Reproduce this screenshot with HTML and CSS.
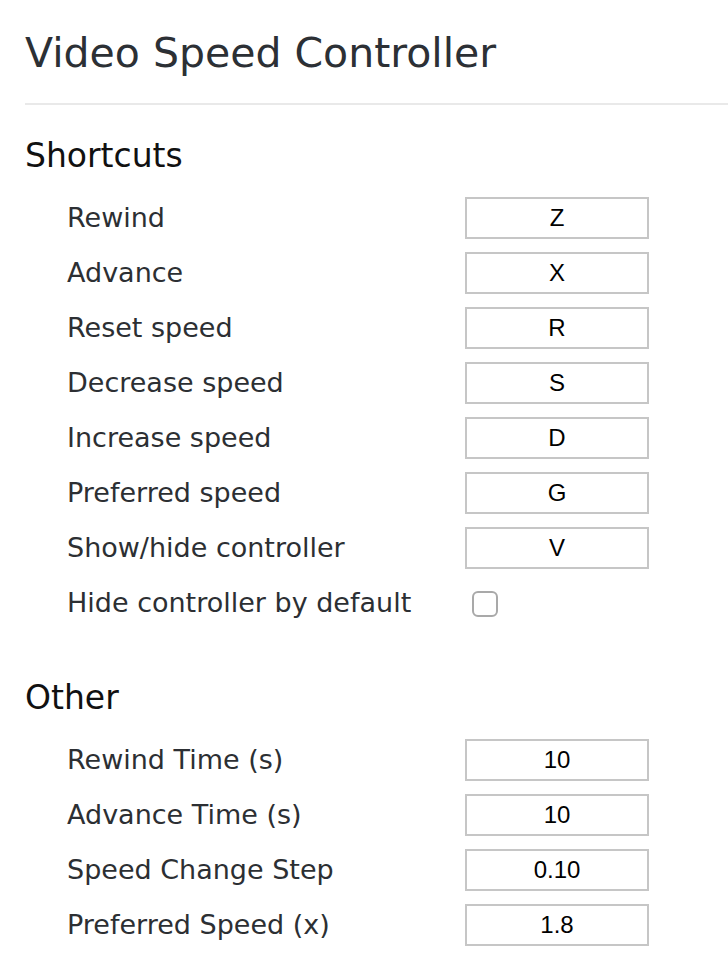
FILE: index.html
```html
<!DOCTYPE html>
<html lang="en">
<head>
<meta charset="utf-8">
<title>Video Speed Controller</title>
<link rel="stylesheet" href="styles.css">
</head>
<body>
<main class="page">
  <h1 class="title">Video Speed Controller</h1>

  <section class="section section-first">
    <h2 class="section-title">Shortcuts</h2>
    <div class="rows">
      <label class="label">Rewind</label><input class="field" type="text" value="Z">
      <label class="label">Advance</label><input class="field" type="text" value="X">
      <label class="label">Reset speed</label><input class="field" type="text" value="R">
      <label class="label">Decrease speed</label><input class="field" type="text" value="S">
      <label class="label">Increase speed</label><input class="field" type="text" value="D">
      <label class="label">Preferred speed</label><input class="field" type="text" value="G">
      <label class="label">Show/hide controller</label><input class="field" type="text" value="V">
      <label class="label">Hide controller by default</label><span class="check-cell"><input class="check" type="checkbox"></span>
    </div>
  </section>

  <section class="section section-other">
    <h2 class="section-title">Other</h2>
    <div class="rows">
      <label class="label">Rewind Time (s)</label><input class="field" type="text" value="10">
      <label class="label">Advance Time (s)</label><input class="field" type="text" value="10">
      <label class="label">Speed Change Step</label><input class="field" type="text" value="0.10">
      <label class="label">Preferred Speed (x)</label><input class="field" type="text" value="1.8">
    </div>
  </section>
</main>
</body>
</html>
```

FILE: styles.css
```css
html, body {
  margin: 0;
  padding: 0;
  background: #ffffff;
}

.page {
  padding: 29px 0 0 25px;
  font-family: "DejaVu Sans", "Liberation Sans", sans-serif;
}

.title {
  margin: 0;
  font-size: 41px;
  line-height: 48px;
  font-weight: normal;
  color: #2c3035;
  padding-bottom: 26px;
  border-bottom: 2px solid #e9e9e9;
}

.section-first {
  margin-top: 31px;
}

.section-other {
  margin-top: 54px;
}

.section-title {
  margin: 0 0 21px 0;
  font-size: 33px;
  line-height: 40px;
  font-weight: normal;
  color: #111111;
}

.rows {
  display: grid;
  grid-template-columns: 398px 184px;
  grid-auto-rows: 42px;
  row-gap: 13px;
  padding-left: 42px;
  align-items: center;
}

.label {
  font-size: 27px;
  line-height: 42px;
  color: #2c2f33;
  white-space: nowrap;
}

.field {
  box-sizing: border-box;
  width: 184px;
  height: 42px;
  margin: 0;
  padding: 0;
  border: 2px solid #c6c6c6;
  border-radius: 0;
  background: #ffffff;
  font-family: "Liberation Sans", Arial, sans-serif;
  font-size: 24px;
  color: #000000;
  text-align: center;
  outline: none;
}

.check-cell {
  display: flex;
  align-items: center;
  height: 42px;
  padding-left: 7px;
  padding-top: 1px;
  box-sizing: border-box;
}

.check {
  -webkit-appearance: none;
  appearance: none;
  box-sizing: border-box;
  width: 26px;
  height: 26px;
  margin: 0;
  border: 2px solid #a9a9a9;
  border-radius: 6px;
  background: #ffffff;
}
```
